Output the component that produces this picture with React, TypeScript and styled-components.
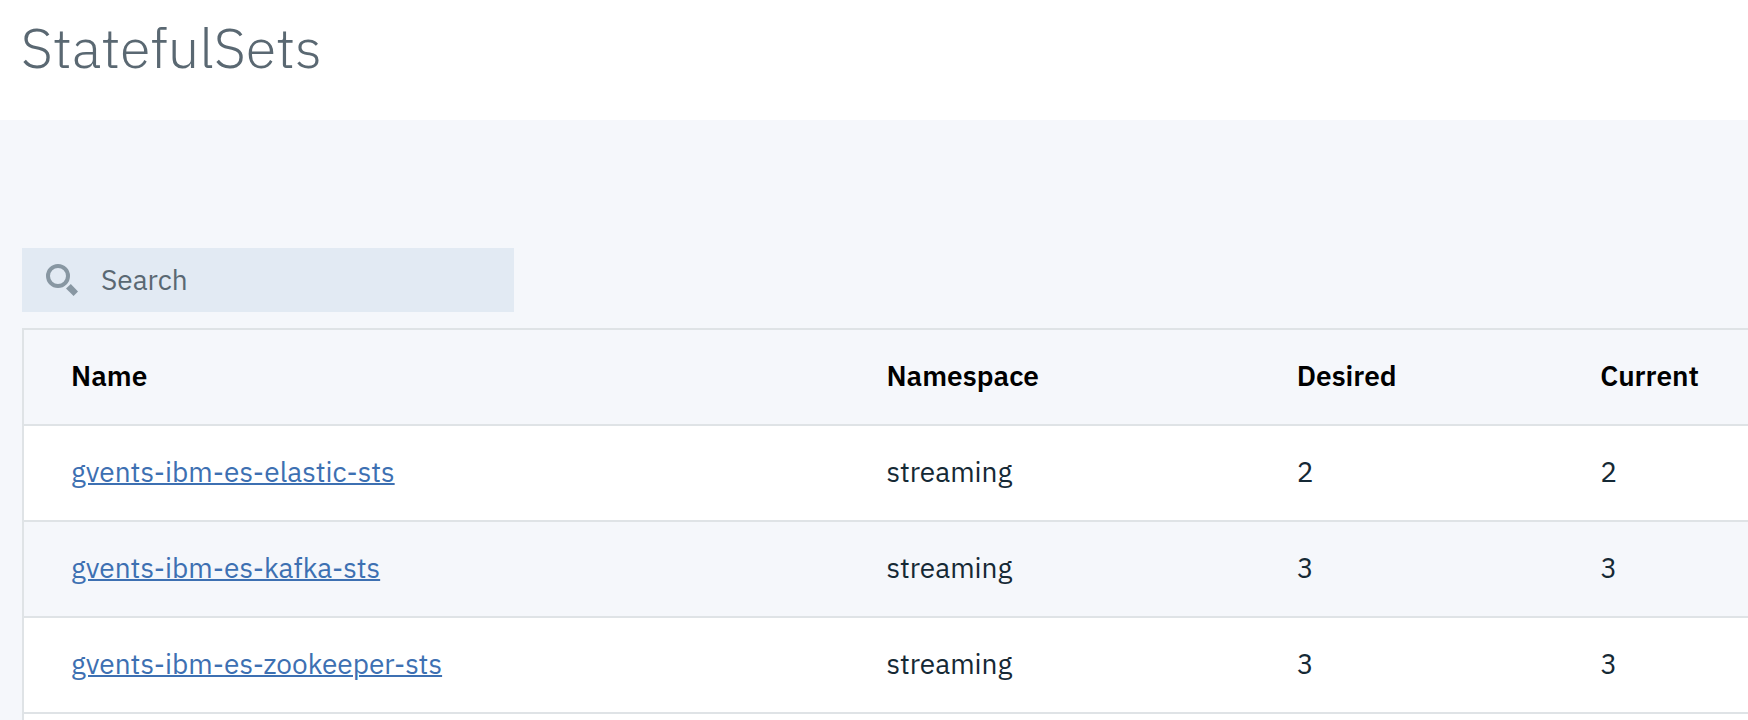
import React from 'react';
import styled, { createGlobalStyle } from 'styled-components';

const GlobalStyle = createGlobalStyle`
  *, *::before, *::after { box-sizing: border-box; }
  body {
    margin: 0;
    background: #f5f7fb;
    color: #152935;
    font-family: 'IBM Plex Sans', Roboto, 'Liberation Sans', sans-serif;
    font-size: 28px;
    line-height: 40px;
  }
`;

const Page = styled.div`
  display: flex;
  flex-direction: column;
  min-height: 100vh;
`;

const Header = styled.header`
  height: 120px;
  padding: 14px 21px;
  background: #ffffff;
`;

const Title = styled.h1`
  margin: 0;
  color: #5a6872;
  font-size: 56px;
  font-weight: 300;
  line-height: 66px;
`;

const Content = styled.main`
  display: flex;
  flex: 1;
  flex-direction: column;
  padding: 128px 0 0 22px;
`;

const SearchBox = styled.label`
  display: flex;
  align-items: center;
  gap: 23px;
  width: 492px;
  max-width: 100%;
  height: 64px;
  margin-bottom: 16px;
  padding: 0 24px;
  background: #e2eaf3;
`;

const SearchGlyph = styled.svg`
  flex: none;
  width: 32px;
  height: 32px;
`;

const SearchInput = styled.input`
  flex: 1;
  min-width: 0;
  padding: 0;
  border: 0;
  outline: 0;
  background: transparent;
  color: #152935;
  font: inherit;

  &::placeholder {
    color: #5a6872;
    opacity: 1;
  }
`;

const TablePanel = styled.section`
  flex: 1;
  border-top: 2px solid #dfe3e6;
  border-left: 2px solid #dfe3e6;
  background: #ffffff;
`;

const Table = styled.table`
  width: 100%;
  table-layout: fixed;
  border-collapse: separate;
  border-spacing: 0;
`;

const Column = styled.col<{ $share?: string }>`
  width: ${({ $share }) => $share ?? 'auto'};
`;

const HeadCell = styled.th`
  height: 96px;
  padding: 0 0 2px 47px;
  border-bottom: 2px solid #dfe3e6;
  background: #f5f7fb;
  color: #000000;
  font-weight: 600;
  text-align: left;
`;

const Cell = styled.td`
  height: 96px;
  padding: 0 0 2px 47px;
  border-bottom: 2px solid #dfe3e6;
`;

const Row = styled.tr`
  background: #ffffff;

  &:nth-child(even) {
    background: #f5f7fb;
  }
`;

const NameLink = styled.a`
  color: #3d70b2;
  text-decoration: underline;
  text-decoration-thickness: 2px;
`;

const columns = [
  { label: 'Name', share: '47.3%' },
  { label: 'Namespace', share: '23.8%' },
  { label: 'Desired', share: '17.6%' },
  { label: 'Current' },
];

const statefulSets = [
  { name: 'gvents-ibm-es-elastic-sts', namespace: 'streaming', desired: 2, current: 2 },
  { name: 'gvents-ibm-es-kafka-sts', namespace: 'streaming', desired: 3, current: 3 },
  { name: 'gvents-ibm-es-zookeeper-sts', namespace: 'streaming', desired: 3, current: 3 },
];

export default function App() {
  return (
    <>
      <GlobalStyle />
      <Page>
        <Header>
          <Title>StatefulSets</Title>
        </Header>
        <Content>
          <SearchBox>
            <SearchGlyph viewBox="0 0 32 32" aria-hidden="true">
              <circle cx="12" cy="12" r="10" fill="none" stroke="#8897a2" strokeWidth="4" />
              <path d="M24.8 20 32 27.4 27.6 32 20 24.6z" fill="#8897a2" />
            </SearchGlyph>
            <SearchInput type="search" placeholder="Search" aria-label="Search" />
          </SearchBox>
          <TablePanel>
            <Table>
              <colgroup>
                {columns.map((column) => (
                  <Column key={column.label} $share={column.share} />
                ))}
              </colgroup>
              <thead>
                <tr>
                  {columns.map((column) => (
                    <HeadCell key={column.label} scope="col">{column.label}</HeadCell>
                  ))}
                </tr>
              </thead>
              <tbody>
                {statefulSets.map((set) => (
                  <Row key={set.name}>
                    <Cell><NameLink href={`#${set.name}`}>{set.name}</NameLink></Cell>
                    <Cell>{set.namespace}</Cell>
                    <Cell>{set.desired}</Cell>
                    <Cell>{set.current}</Cell>
                  </Row>
                ))}
              </tbody>
            </Table>
          </TablePanel>
        </Content>
      </Page>
    </>
  );
}
